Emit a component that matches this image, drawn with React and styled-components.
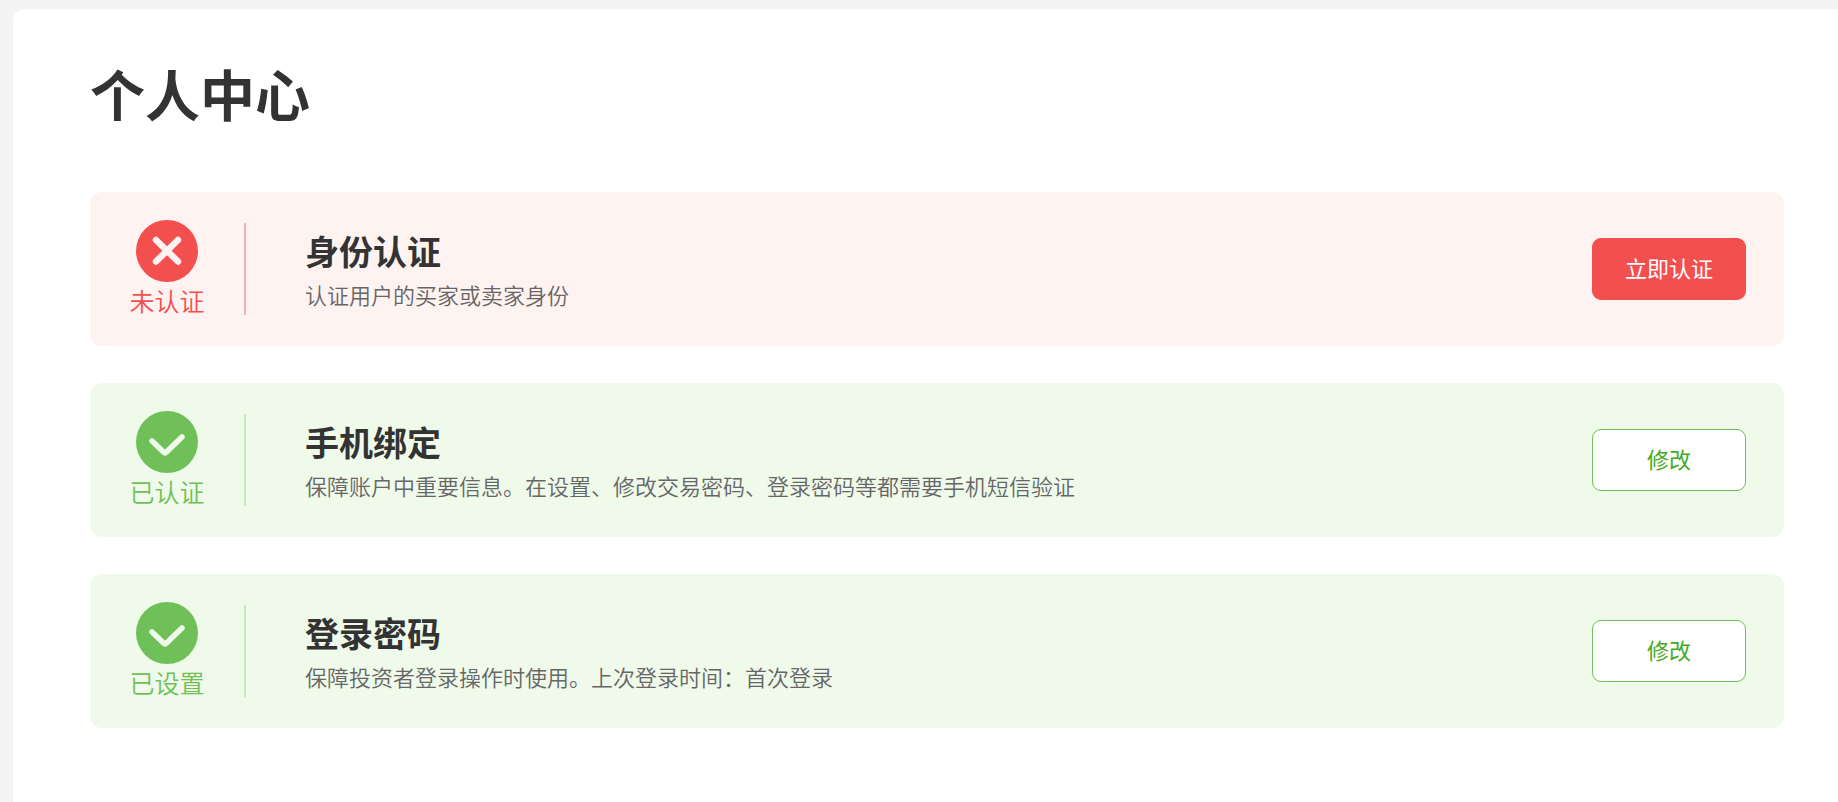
import styled, { createGlobalStyle } from 'styled-components'

const GlobalStyle = createGlobalStyle`
  * {
    box-sizing: border-box;
  }

  body {
    margin: 0;
    background: #f4f4f4;
    color: #333333;
    font-family: 'Noto Sans CJK SC', sans-serif;
  }
`

const themes = {
  danger: { main: '#f44f4f', background: '#fff3f1', divider: '#efb1b5' },
  success: { main: '#6fc058', background: '#effaea', divider: '#c5e8bb' },
}

const Page = styled.div`
  min-height: 100vh;
  padding: 9px 0 0 13px;
  display: flex;
`

const Panel = styled.main`
  flex: 1;
  padding: 43px 54px 54px 77px;
  border-radius: 12px 0 0 0;
  background: #ffffff;
`

const PageTitle = styled.h1`
  margin: 0 0 60px;
  font-size: 55px;
  line-height: 80px;
  font-weight: 700;
`

const CardList = styled.div`
  display: flex;
  flex-direction: column;
  gap: 37px;
`

const Card = styled.section`
  display: flex;
  align-items: center;
  min-height: 154px;
  padding-right: 38px;
  border-radius: 12px;
  background: ${({ $theme }) => $theme.background};
`

const Status = styled.div`
  display: flex;
  flex-direction: column;
  align-items: center;
  width: 154px;
  color: ${({ $theme }) => $theme.main};
  font-size: 25px;
  line-height: 36px;
  font-weight: 350;
`

const Divider = styled.div`
  width: 2px;
  height: 92px;
  background: ${({ $theme }) => $theme.divider};
`

const Info = styled.div`
  flex: 1;
  padding: 0 59px;
`

const CardTitle = styled.h2`
  margin: 0;
  font-size: 34px;
  line-height: 50px;
  font-weight: 700;
`

const Description = styled.p`
  margin: 0;
  color: #666666;
  font-size: 22px;
  line-height: 36px;
  font-weight: 350;
`

const ActionButton = styled.button`
  width: 154px;
  height: 62px;
  padding: 0 0 4px;
  border: 1px solid ${({ $theme }) => $theme.main};
  border-radius: 9px;
  background: ${({ $primary, $theme }) => ($primary ? $theme.main : '#ffffff')};
  color: ${({ $primary }) => ($primary ? '#ffffff' : '#44aa22')};
  font-family: inherit;
  font-size: 22px;
  line-height: 32px;
  cursor: pointer;
`

const StatusIcon = ({ type }) => (
  <svg width='62' height='62' viewBox='0 0 62 62' aria-hidden='true'>
    <circle cx='31' cy='31' r='31' fill={themes[type].main} />
    <path
      d={
        type === 'danger'
          ? 'M20 20L42 41.5M42 20L20 41.5'
          : 'M16 30L27.5 41Q29 42.5 30.5 41L46 26'
      }
      fill='none'
      stroke={themes[type].background}
      strokeWidth={type === 'danger' ? 6.5 : 5.5}
      strokeLinecap='round'
      strokeLinejoin='round'
    />
  </svg>
)

const items = [
  {
    type: 'danger',
    status: '未认证',
    title: '身份认证',
    description: '认证用户的买家或卖家身份',
    action: '立即认证',
  },
  {
    type: 'success',
    status: '已认证',
    title: '手机绑定',
    description:
      '保障账户中重要信息。在设置、修改交易密码、登录密码等都需要手机短信验证',
    action: '修改',
  },
  {
    type: 'success',
    status: '已设置',
    title: '登录密码',
    description: '保障投资者登录操作时使用。上次登录时间：首次登录',
    action: '修改',
  },
]

const SecurityCard = ({ type, status, title, description, action }) => {
  const theme = themes[type]

  return (
    <Card $theme={theme}>
      <Status $theme={theme}>
        <StatusIcon type={type} />
        <span>{status}</span>
      </Status>
      <Divider $theme={theme} />
      <Info>
        <CardTitle>{title}</CardTitle>
        <Description>{description}</Description>
      </Info>
      <ActionButton type='button' $theme={theme} $primary={type === 'danger'}>
        {action}
      </ActionButton>
    </Card>
  )
}

const App = () => (
  <>
    <GlobalStyle />
    <Page lang='zh-CN'>
      <Panel>
        <PageTitle>个人中心</PageTitle>
        <CardList>
          {items.map((item) => (
            <SecurityCard key={item.title} {...item} />
          ))}
        </CardList>
      </Panel>
    </Page>
  </>
)

export default App
